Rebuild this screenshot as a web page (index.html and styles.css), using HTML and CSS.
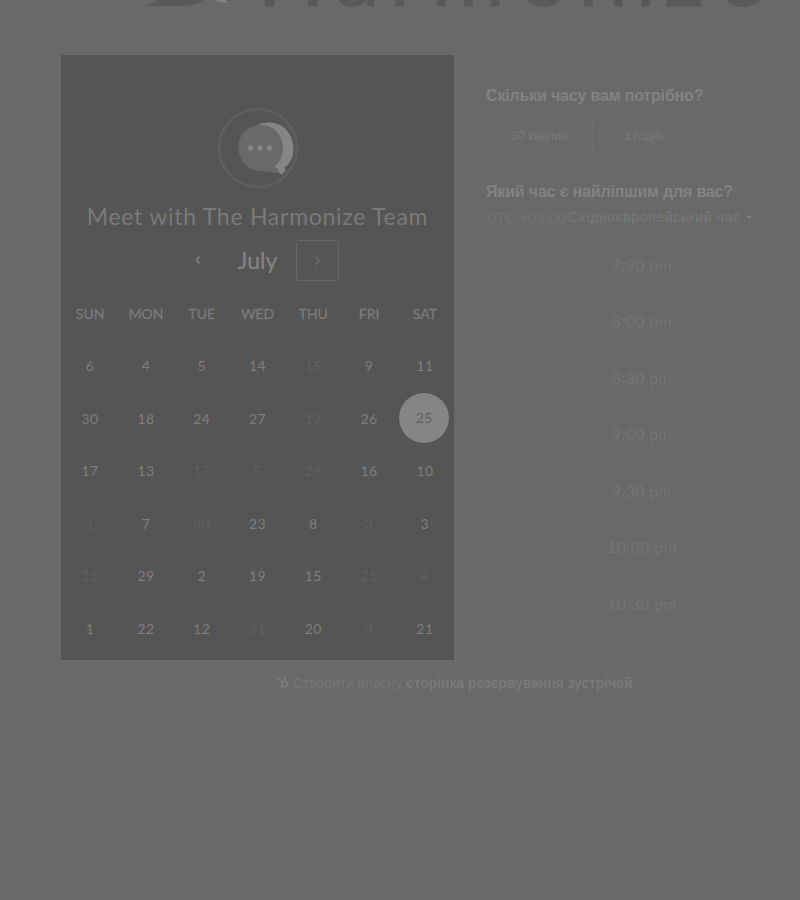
FILE: index.html
```
<!DOCTYPE html>
<html lang="uk">
<head>
<meta charset="utf-8">
<title>Meet with The Harmonize Team</title>
<link rel="stylesheet" href="styles.css">
</head>
<body>
<header class="brand">
  <svg class="brand-art" width="800" height="55" viewBox="0 0 800 55">
    <path class="brand-mark" d="M144 6 Q156 3 161 -5 H208 Q201 6 181 6 Z"/>
    <path class="brand-tail" d="M208 -3 L216 1 L228 3 L222 -3 Z"/>
    <text class="brand-name" y="6" x="257 335 389 431 518 578 635 664 717">Harmonize</text>
  </svg>
</header>
<main class="scheduler">
  <section class="calendar">
    <svg class="avatar" width="82" height="82" viewBox="0 0 82 82">
      <circle class="ring-shade" cx="41" cy="41" r="38.5"/>
      <circle class="ring" cx="41" cy="41" r="39.2"/>
      <path class="bubble-back" d="M41 18 C60 10 76.500 23 76.500 42 C76.500 50 73 57 67 61 L69 63 L64 68 L57 60 Z"/>
      <path class="bubble" d="M43 18 C57 18 66 28 66 41 C66 49 63 55 58 59 L64 67 C54 64 45 65 37 63 C28 60 21.500 52 21.500 41 C21.500 28 30 18 43 18 Z"/>
      <g class="dots"><circle cx="33.500" cy="41" r="2.700"/><circle cx="43" cy="41" r="2.700"/><circle cx="52.500" cy="41" r="2.700"/></g>
    </svg>
    <h1 class="title">Meet with The Harmonize Team</h1>
    <div class="month-nav">
      <button class="nav-btn prev"><svg width="8" height="12" viewBox="0 0 8 12"><path d="M5.500 1.500 L2.500 5 L5.500 8.500"/></svg></button>
      <h2 class="month">July</h2>
      <button class="nav-btn next"><svg width="8" height="12" viewBox="0 0 8 12"><path d="M2.500 2 L6 6 L2.500 10"/></svg></button>
    </div>
    <div class="weekdays"><span>SUN</span><span>MON</span><span>TUE</span><span>WED</span><span>THU</span><span>FRI</span><span>SAT</span></div>
    <div class="days">
      <span>6</span><span>4</span><span>5</span><span>14</span><span class="off">15</span><span>9</span><span>11</span>
      <span>30</span><span>18</span><span>24</span><span>27</span><span class="off">17</span><span>26</span><span class="picked">25</span>
      <span>17</span><span>13</span><span class="off">17</span><span class="off">5</span><span class="off">29</span><span>16</span><span>10</span>
      <span class="off">1</span><span>7</span><span class="off">30</span><span>23</span><span>8</span><span class="off">3</span><span>3</span>
      <span class="off">21</span><span>29</span><span>2</span><span>19</span><span>15</span><span class="off">21</span><span class="off">4</span>
      <span>1</span><span>22</span><span>12</span><span class="off">31</span><span>20</span><span class="off">3</span><span>21</span>
    </div>
  </section>
  <section class="options">
    <h3 class="question">Скільки часу вам потрібно?</h3>
    <div class="durations"><button>30 хвилин</button><button>1 годин</button></div>
    <h3 class="question">Який час є найліпшим для вас?</h3>
    <div class="timezone"><span class="utc">UTC +03:00</span> <span class="zone">Східноєвропейський час</span><i class="caret"></i></div>
    <div class="slots">
      <button>7:30 pm</button><button>8:00 pm</button><button>8:30 pm</button><button>9:00 pm</button><button>9:30 pm</button><button>10:00 pm</button><button>10:30 pm</button>
    </div>
  </section>
</main>
<footer class="promo">
  <svg class="sprocket" width="14" height="14" viewBox="0 0 14 14"><circle cx="8.500" cy="8" r="2.700"/><path d="M1 1.500 L6.500 6 M8.800 1 V5 M6.500 10 L4 12.500"/></svg>
  <span class="promo-text">Створити власну</span><b class="promo-link">сторінка резервування зустрічей</b>
</footer>
</body>
</html>
```
FILE: styles.css
```
* { box-sizing: border-box; }
body {
  margin: 0;
  width: 800px;
  height: 900px;
  overflow: hidden;
  background: #696969;
  color: #858585;
  font-family: "Liberation Sans", sans-serif;
}
h1, h2, h3 { margin: 0; }
button { margin: 0; padding: 0; background: none; font: inherit; color: inherit; }

.brand { height: 55px; }
.brand-art { display: block; }
.brand-mark, .brand-name { fill: #595959; }
.brand-name { font: 400 90px Lato, sans-serif; stroke: #5d5d5d; stroke-width: 1; }
.brand-tail { fill: #848484; }

.scheduler { display: flex; height: 605px; padding-left: 61px; }
.calendar {
  width: 393px;
  background: #555;
  display: flex;
  flex-direction: column;
  align-items: center;
  padding-top: 52px;
  font-family: Lato, sans-serif;
}
.avatar { display: block; flex: none; }
.ring { fill: none; stroke: #626262; stroke-width: 1.2; }
.ring-shade { fill: none; stroke: #5b5b5b; stroke-width: 3.5; }
.bubble-back, .dots { fill: #858585; }
.bubble { fill: #696969; }
.title {
  margin-top: 9px;
  height: 36px;
  line-height: 36px;
  font-size: 23px;
  font-weight: 400;
  letter-spacing: 0.73px;
  white-space: nowrap;
  color: #797979;
}
.month-nav { display: flex; align-items: center; margin-top: 5px; height: 43px; }
.nav-btn {
  display: flex;
  align-items: center;
  justify-content: center;
  width: 43px;
  height: 41px;
  border: 1px solid transparent;
  border-radius: 3px;
}
.nav-btn path { fill: none; stroke: #808080; stroke-width: 1.6; }
.nav-btn.next { border-color: #676767; }
.nav-btn.next path { stroke: #6a6a6a; }
.month { width: 76px; text-align: center; font-size: 23px; line-height: 43px; font-weight: 400; color: #828282; -webkit-text-stroke: 0.3px #828282; }
.weekdays, .days { display: grid; grid-template-columns: repeat(7, 55.8px); text-align: center; }
.weekdays { margin-top: 20px; line-height: 24px; font-size: 14px; font-weight: 400; -webkit-text-stroke: 0.3px #7a7a7a; color: #7a7a7a; }
.days { margin-top: 13.4px; grid-auto-rows: 52.5px; align-items: center; justify-items: center; font-size: 14px; letter-spacing: 0.4px; color: #7e7e7e; }
.days .off { color: #606060; }
.days .picked { width: 50px; height: 50px; line-height: 49px; margin-right: 1px; border-radius: 50%; background: #858585; color: #606060; }

.options { width: 314px; margin-left: 32px; padding-top: 30px; }
.question { font-size: 16px; line-height: 22px; font-weight: 700; letter-spacing: -0.17px; white-space: nowrap; color: #828282; }
.durations { display: flex; width: 212px; height: 31px; margin: 13px 0 30px; border: 1px solid #6e6e6e; border-radius: 3px; }
.durations button { flex: 1; border: 0; font-size: 12px; color: #7a7a7a; }
.durations button + button { border-left: 1px solid #707070; }
.timezone { display: flex; align-items: center; height: 28px; font-size: 14px; white-space: nowrap; }
.utc { width: 82px; font-family: Lato, sans-serif; font-size: 14px; letter-spacing: 0.5px; color: #737373; }
.zone { font-size: 14px; letter-spacing: 0.6px; color: #787878; }
.caret { margin-left: 6px; border: 3.5px solid transparent; border-top-color: #828282; border-bottom: 0; }
.slots { display: flex; flex-direction: column; gap: 8.5px; margin: 9px 6px 0 4px; }
.slots button { height: 48px; border: 1px solid #6c6c6c; border-radius: 3px; font-family: Lato, sans-serif; font-size: 16px; letter-spacing: 0.3px; color: #747474; }

.promo {
  display: flex;
  align-items: center;
  width: 739px;
  height: 50px;
  margin-left: 61px;
  padding: 0 0 5px 214px;
  border: 1px solid #6b6b6b;
  border-right: 0;
  font-size: 14px;
  letter-spacing: -0.08px;
  white-space: nowrap;
}
.sprocket { flex: none; margin-right: 3px; fill: none; stroke: #7e7e7e; stroke-width: 1.7; }
.promo-text { width: 113px; color: #757575; }
.promo-link { color: #797979; }
```
